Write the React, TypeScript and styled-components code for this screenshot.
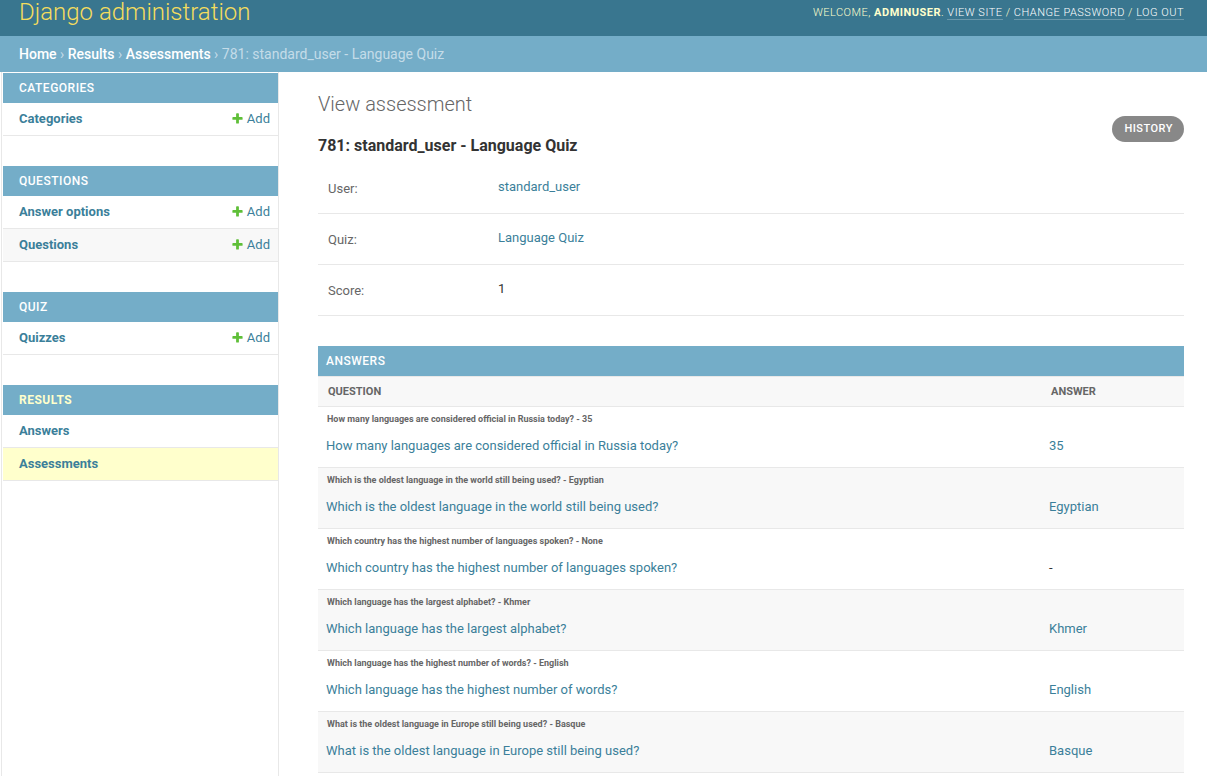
import React from "react";
import styled, { createGlobalStyle } from "styled-components";

const color = {
  header: "#39768f",
  bar: "#74adc8",
  link: "#3b7f9a",
  line: "#e8e8e8",
  shade: "#f8f8f8",
  text: "#333",
  quiet: "#666",
  cream: "#ffffcc",
};

const GlobalStyle = createGlobalStyle`
  *, *::before, *::after { box-sizing: border-box; }
  body {
    margin: 0;
    background: #fff;
    color: ${color.text};
    font-family: Roboto, "Liberation Sans", sans-serif;
    font-size: 13px;
    line-height: 16px;
  }
  h1, h2, h3, p, dl, dd { margin: 0; }
  a { color: ${color.link}; text-decoration: none; }
`;

const Page = styled.div`
  display: flex;
  flex-direction: column;
  min-height: 100vh;
`;

const Header = styled.header`
  display: flex;
  justify-content: space-between;
  align-items: flex-start;
  height: 36px;
  padding: 0 23px 0 19px;
  background: ${color.header};
  color: ${color.cream};
`;

const SiteName = styled.a`
  color: #f5dd5d;
  font-size: 24px;
  font-weight: 300;
  line-height: 24px;
`;

const UserTools = styled.div`
  padding-top: 6px;
  font-size: 11px;
  font-weight: 300;
  line-height: 14px;
  letter-spacing: 0.5px;
  text-transform: uppercase;

  strong { font-weight: 700; }
`;

const UserLink = styled.a`
  border-bottom: 1px solid rgba(255, 255, 255, 0.25);
  color: #fff;
`;

const Breadcrumbs = styled.nav`
  padding: 10px 23px 10px 19px;
  background: ${color.bar};
  color: #c4dce8;
  font-size: 14px;
  line-height: 16px;
`;

const Crumb = styled.a`
  color: #fff;
  font-weight: 500;
`;

const Body = styled.div`
  display: flex;
  flex: 1;
`;

const Sidebar = styled.nav`
  flex: 0 0 278px;
  margin-left: 1px;
  padding: 1px 0 0 1px;
  border: solid ${color.line};
  border-width: 0 1px;
`;

const AppModule = styled.table`
  width: 100%;
  margin-bottom: 30px;
  border-spacing: 0;
`;

const AppCaption = styled.caption<{ $current?: boolean }>`
  padding: 8px 16px;
  background: ${color.bar};
  font-size: 12px;
  line-height: 14px;
  letter-spacing: 0.5px;
  text-align: left;
  text-transform: uppercase;

  a {
    color: ${(p) => (p.$current ? color.cream : "#fff")};
    font-weight: ${(p) => (p.$current ? 700 : 500)};
  }
`;

const ModelRow = styled.tr<{ $current?: boolean }>`
  background: ${(p) => (p.$current ? color.cream : "transparent")};

  &:nth-child(even) {
    background: ${(p) => (p.$current ? color.cream : color.shade)};
  }
`;

const ModelName = styled.th`
  padding: 8px 16px;
  border-bottom: 1px solid ${color.line};
  text-align: left;
  font-weight: 700;
`;

const ModelAction = styled.td`
  padding: 8px;
  border-bottom: 1px solid ${color.line};
`;

const AddLink = styled.a`
  display: flex;
  justify-content: flex-end;
  align-items: center;
  gap: 3px;

  svg { margin-bottom: 1px; }
`;

const Main = styled.main`
  flex: 1;
  min-width: 0;
  padding: 20px 23px 2px 39px;
`;

const TitleRow = styled.div`
  display: flex;
  justify-content: space-between;
  align-items: flex-start;
  margin-bottom: 4px;
`;

const PageTitle = styled.h1`
  margin-bottom: 17px;
  color: ${color.quiet};
  font-size: 20px;
  font-weight: 300;
  line-height: 24px;
`;

const ObjectTitle = styled.h2`
  font-size: 16px;
  font-weight: 700;
  line-height: 26px;
`;

const HistoryLink = styled.a`
  margin-top: 24px;
  padding: 6px 11px 6px 12px;
  border-radius: 13px;
  background: #888;
  color: #fff;
  font-size: 11px;
  font-weight: 500;
  line-height: 14px;
  letter-spacing: 0.5px;
  text-transform: uppercase;
`;

const Fields = styled.dl`
  margin-bottom: 30px;
`;

const Field = styled.div`
  display: flex;
  align-items: flex-start;
  height: 51px;
  padding: 16px 10px 0;
  border-bottom: 1px solid ${color.line};
`;

const FieldLabel = styled.dt`
  width: 170px;
  padding-top: 2px;
  color: ${color.quiet};
`;

const SectionTitle = styled.h2`
  padding: 8px;
  background: ${color.bar};
  color: #fff;
  font-size: 12px;
  font-weight: 500;
  line-height: 14px;
  letter-spacing: 0.5px;
  text-transform: uppercase;
`;

const AnswerTable = styled.table`
  width: 100%;
  border-spacing: 0;
  table-layout: fixed;
`;

const ColumnHead = styled.th<{ $narrow?: boolean }>`
  width: ${(p) => (p.$narrow ? "143px" : "auto")};
  height: 31px;
  padding: 0 10px;
  border: solid ${color.line};
  border-width: 1px 0;
  background: ${color.shade};
  color: ${color.quiet};
  font-size: 11px;
  font-weight: 700;
  line-height: 14px;
  text-align: left;
  text-transform: uppercase;
`;

const AnswerRow = styled.tr`
  &:nth-child(even) { background: ${color.shade}; }
`;

const AnswerCell = styled.td`
  padding: 6px 8px 13px;
  border-bottom: 1px solid ${color.line};
  vertical-align: bottom;
`;

const Original = styled.p`
  margin-bottom: 13px;
  padding-left: 1px;
  color: ${color.quiet};
  font-size: 9px;
  font-weight: 700;
  line-height: 12px;
`;

const PlusIcon = () => (
  <svg width="13" height="13" viewBox="0 0 1792 1792" aria-hidden="true">
    <path
      fill="#5fbf38"
      d="M1600 796v192q0 40-28 68t-68 28h-416v416q0 40-28 68t-68 28h-192q-40 0-68-28t-28-68v-416h-416q-40 0-68-28t-28-68v-192q0-40 28-68t68-28h416v-416q0-40 28-68t68-28h192q40 0 68 28t28 68v416h416q40 0 68 28t28 68z"
    />
  </svg>
);

type Model = { name: string; add?: boolean; current?: boolean };

const apps: { name: string; current?: boolean; models: Model[] }[] = [
  { name: "Categories", models: [{ name: "Categories", add: true }] },
  {
    name: "Questions",
    models: [
      { name: "Answer options", add: true },
      { name: "Questions", add: true },
    ],
  },
  { name: "Quiz", models: [{ name: "Quizzes", add: true }] },
  {
    name: "Results",
    current: true,
    models: [{ name: "Answers" }, { name: "Assessments", current: true }],
  },
];

const answers: { question: string; answer: string | null }[] = [
  { question: "How many languages are considered official in Russia today?", answer: "35" },
  { question: "Which is the oldest language in the world still being used?", answer: "Egyptian" },
  { question: "Which country has the highest number of languages spoken?", answer: null },
  { question: "Which language has the largest alphabet?", answer: "Khmer" },
  { question: "Which language has the highest number of words?", answer: "English" },
  { question: "What is the oldest language in Europe still being used?", answer: "Basque" },
];

export default function App() {
  return (
    <Page>
      <GlobalStyle />
      <Header>
        <SiteName href="#">Django administration</SiteName>
        <UserTools>
          Welcome, <strong>adminuser</strong>. <UserLink href="#">View site</UserLink> /{" "}
          <UserLink href="#">Change password</UserLink> / <UserLink href="#">Log out</UserLink>
        </UserTools>
      </Header>
      <Breadcrumbs aria-label="Breadcrumbs">
        <Crumb href="#">Home</Crumb> › <Crumb href="#">Results</Crumb> ›{" "}
        <Crumb href="#">Assessments</Crumb> › 781: standard_user - Language Quiz
      </Breadcrumbs>
      <Body>
        <Sidebar aria-label="Applications">
          {apps.map((app) => (
            <AppModule key={app.name}>
              <AppCaption $current={app.current}>
                <a href="#">{app.name}</a>
              </AppCaption>
              <tbody>
                {app.models.map((model) => (
                  <ModelRow key={model.name} $current={model.current}>
                    <ModelName scope="row">
                      <a href="#">{model.name}</a>
                    </ModelName>
                    <ModelAction>
                      {model.add && (
                        <AddLink href="#">
                          <PlusIcon />
                          Add
                        </AddLink>
                      )}
                    </ModelAction>
                  </ModelRow>
                ))}
              </tbody>
            </AppModule>
          ))}
        </Sidebar>
        <Main>
          <TitleRow>
            <div>
              <PageTitle>View assessment</PageTitle>
              <ObjectTitle>781: standard_user - Language Quiz</ObjectTitle>
            </div>
            <HistoryLink href="#">History</HistoryLink>
          </TitleRow>
          <Fields>
            <Field>
              <FieldLabel>User:</FieldLabel>
              <dd><a href="#">standard_user</a></dd>
            </Field>
            <Field>
              <FieldLabel>Quiz:</FieldLabel>
              <dd><a href="#">Language Quiz</a></dd>
            </Field>
            <Field>
              <FieldLabel>Score:</FieldLabel>
              <dd>1</dd>
            </Field>
          </Fields>
          <SectionTitle>Answers</SectionTitle>
          <AnswerTable>
            <thead>
              <tr>
                <ColumnHead scope="col">Question</ColumnHead>
                <ColumnHead scope="col" $narrow>Answer</ColumnHead>
              </tr>
            </thead>
            <tbody>
              {answers.map(({ question, answer }) => (
                <AnswerRow key={question}>
                  <AnswerCell>
                    <Original>{`${question} - ${answer ?? "None"}`}</Original>
                    <a href="#">{question}</a>
                  </AnswerCell>
                  <AnswerCell>{answer ? <a href="#">{answer}</a> : "-"}</AnswerCell>
                </AnswerRow>
              ))}
            </tbody>
          </AnswerTable>
        </Main>
      </Body>
    </Page>
  );
}
